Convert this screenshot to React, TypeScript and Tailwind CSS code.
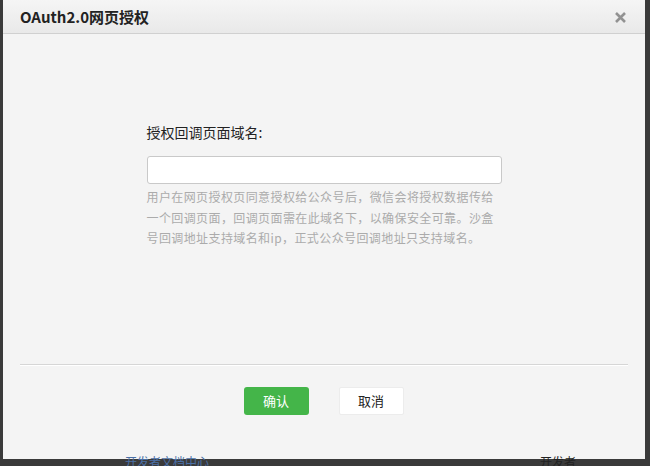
import React from "react";

const cjk = { fontFamily: '"Noto Sans CJK SC", "Noto Sans", sans-serif' };

const hintLines = [
  "用户在网页授权页同意授权给公众号后，微信会将授权数据传给",
  "一个回调页面，回调页面需在此域名下，以确保安全可靠。沙盒",
  "号回调地址支持域名和ip，正式公众号回调地址只支持域名。",
];

export default function App() {
  return (
    <div className="w-[650px] h-[466px] bg-[#3a3a3a] flex flex-col overflow-hidden" style={cjk}>
      <div className="flex pl-[3px] pr-[5px]">
        <div className="w-[642px] h-[459px] bg-[#f4f4f4] flex flex-col">
          <div className="h-[34px] shrink-0 flex items-center justify-between pl-[17px] pr-[18px] bg-gradient-to-b from-[#f5f5f5] to-[#e9e9e9] border-b border-[#d0d0d0]">
            <span className="text-[15px] font-bold text-[#222] leading-none">OAuth2.0网页授权</span>
            <svg width="13" height="13" viewBox="0 0 13 13" className="mt-[2px]">
              <path d="M2 2 L11 11 M11 2 L2 11" stroke="#929292" strokeWidth="2.6" strokeLinecap="butt" />
            </svg>
          </div>
          <div className="h-[330px] shrink-0 flex flex-col items-center pt-[88px]">
            <div className="w-[355px]">
              <div className="text-[14px] leading-[20px] text-[#222] mb-[14px]">授权回调页面域名:</div>
              <div className="h-[28px] bg-white border border-[#c9c9c9] rounded-[3px]" />
              <div className="mt-[3px] text-[12px] leading-[20.5px] tracking-[0.4px] text-[#ababab] whitespace-nowrap">
                {hintLines.map((l) => (
                  <div key={l}>{l}</div>
                ))}
              </div>
            </div>
          </div>
          <div className="mx-[17px] border-t border-[#d6d6d6] border-b-[1px] border-b-white" />
          <div className="flex justify-center gap-[30px] pt-[21px] pr-[1px]">
            <button className="w-[65px] h-[28px] rounded-[3px] bg-[#44b549] text-white text-[13px]">确认</button>
            <button className="w-[65px] h-[28px] rounded-[2px] bg-white border border-[#ececec] text-[#222] text-[13px]">取消</button>
          </div>
        </div>
      </div>
      <div className="relative flex-1">
        <span className="absolute left-[125px] top-[-3px] text-[12px] leading-none text-[#4a6fa5]">开发者文档中心</span>
        <span className="absolute left-[540px] top-[-3px] text-[12px] leading-none text-[#222]">开发者</span>
      </div>
    </div>
  );
}
